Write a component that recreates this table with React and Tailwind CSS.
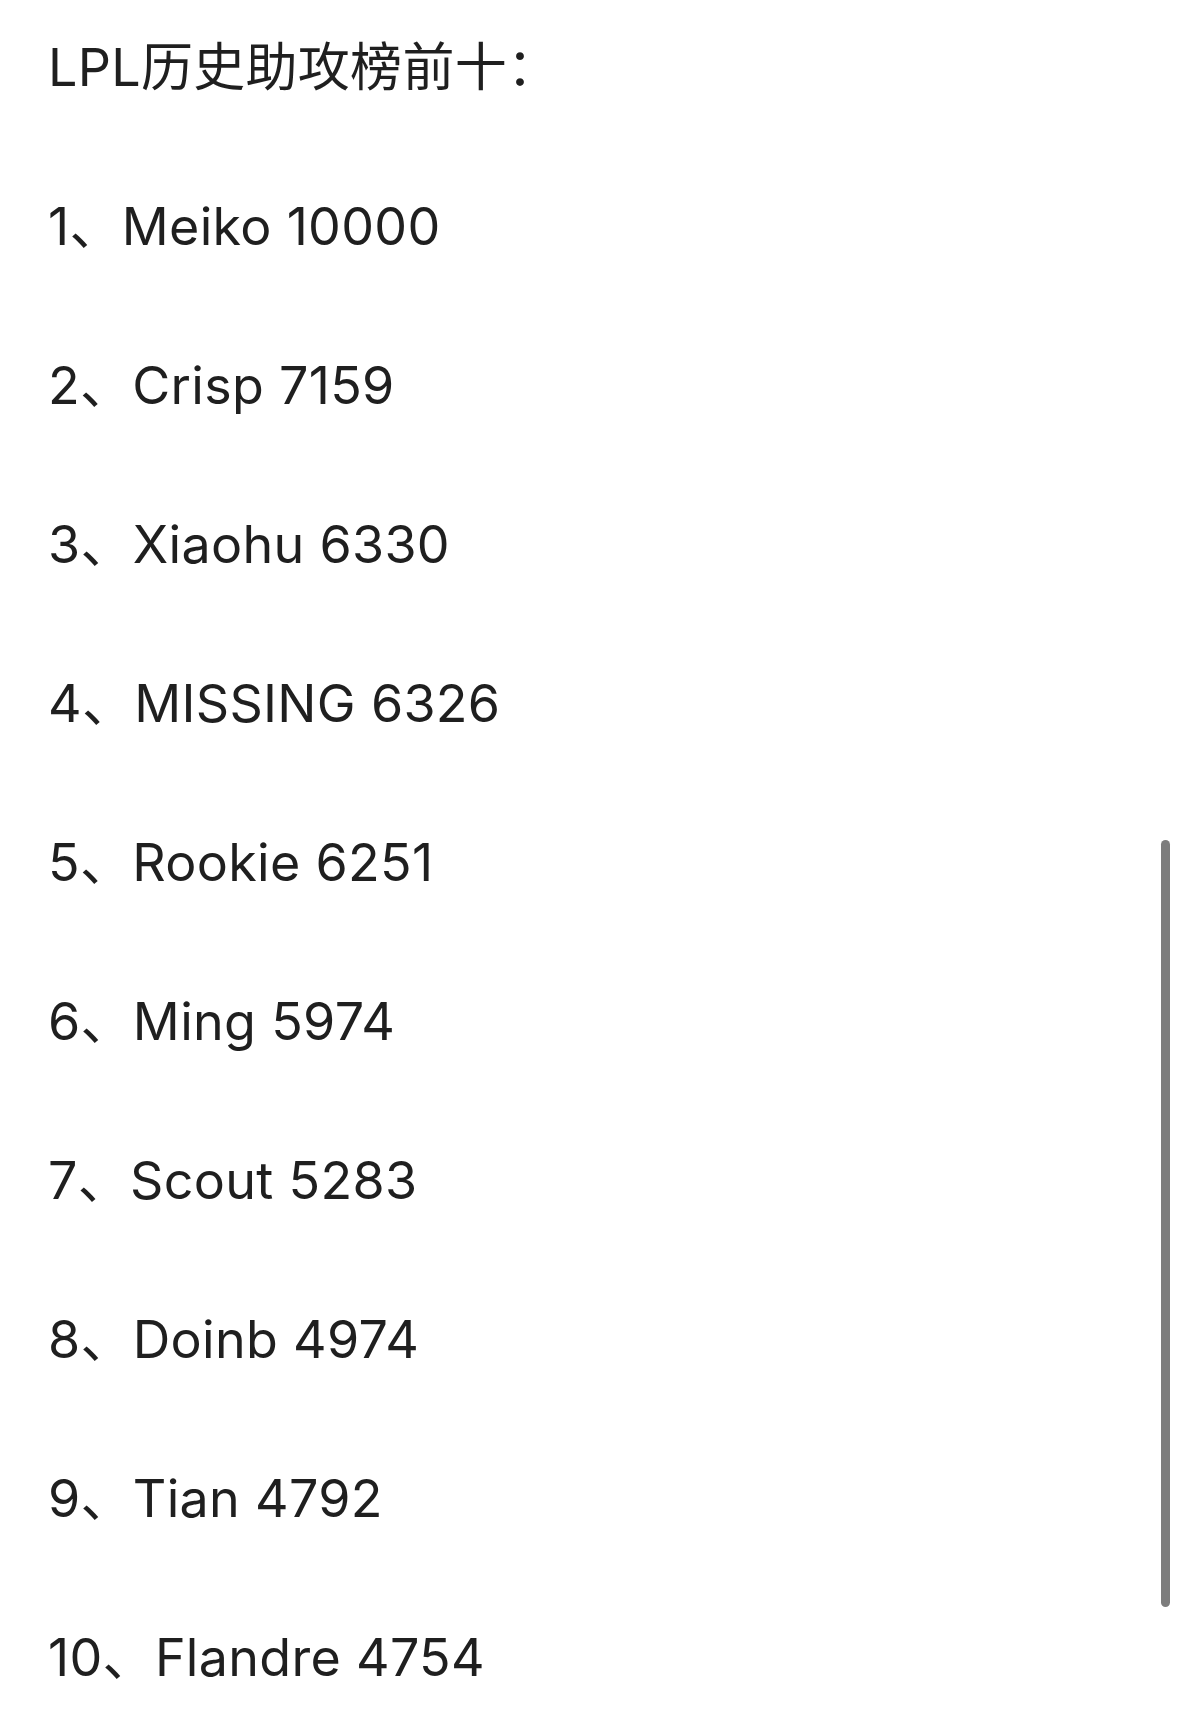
const rows = [
  ['1', 'Meiko', '10000'],
  ['2', 'Crisp', '7159'],
  ['3', 'Xiaohu', '6330'],
  ['4', 'MISSING', '6326'],
  ['5', 'Rookie', '6251'],
  ['6', 'Ming', '5974'],
  ['7', 'Scout', '5283'],
  ['8', 'Doinb', '4974'],
  ['9', 'Tian', '4792'],
  ['10', 'Flandre', '4754'],
];

export default function App() {
  return (
    <div className="relative min-h-[1711px] bg-white overflow-hidden">
      <div
        className="flex flex-col gap-[79px] pl-[48px] pt-[28px] text-[52px] tracking-[0.3px] text-[#1f1f1f]"
        style={{ fontFamily: 'Inter, "Noto Sans CJK SC", sans-serif' }}
      >
        <div className="h-[80px] flex items-center">LPL历史助攻榜前十：</div>
        {rows.map(([n, name, num]) => (
          <div key={n} className="h-[80px] flex items-center whitespace-pre">
            {n}、{name} {num}
          </div>
        ))}
      </div>
      <div className="absolute left-[1161px] top-[840px] w-[9px] h-[767px] rounded-full bg-[#7d7d7d]" />
    </div>
  );
}
